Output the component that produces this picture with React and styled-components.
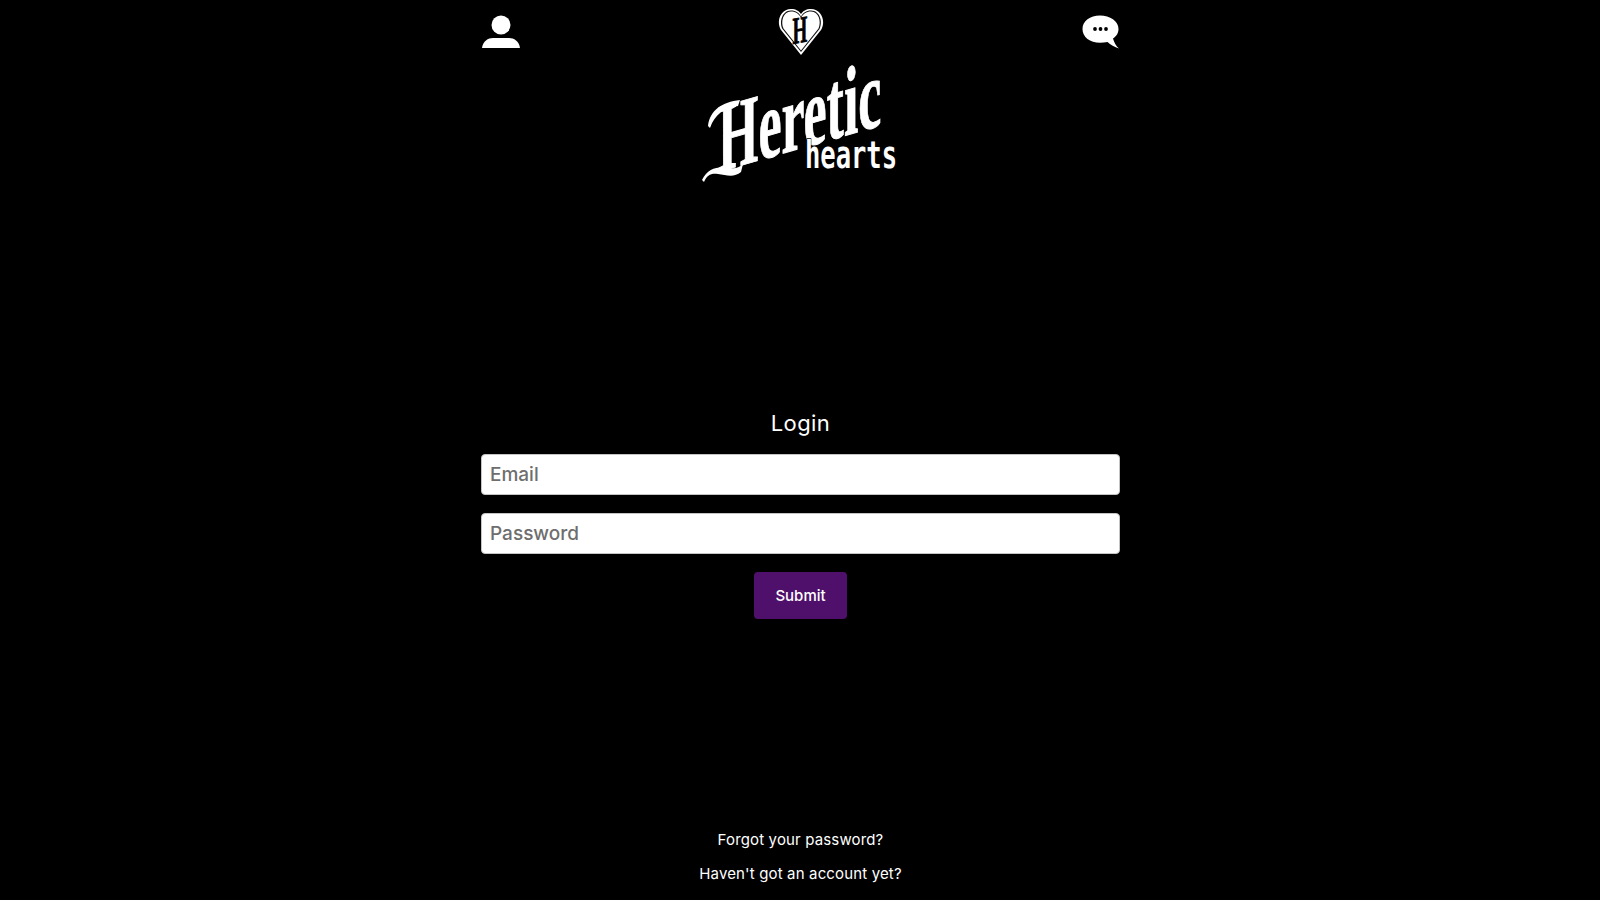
import React from 'react';
import styled, {createGlobalStyle} from 'styled-components';

const GlobalStyle = createGlobalStyle`
    html, body {
        margin: 0;
        height: 100%;
        background: #000;
    }

    body {
        font-family: "Inter", "Noto Sans", sans-serif;
        color: #fff;
    }
`;

const UserIcon = () => (
    <svg width="40" height="36" viewBox="0 0 40 36" aria-hidden="true">
        <circle cx="20" cy="11" r="9.5" fill="#fff"/>
        <path d="M1 34 C2 27 7 24 12 24 H28 C33 24 38 27 39 34 Z" fill="#fff"/>
    </svg>
);

const HeartIcon = () => (
    <svg width="46" height="48" viewBox="0 0 46 48" aria-hidden="true">
        <path d="M23 47 L3 22 C-2 14 2 1 13 1 C18 1 21 3 23 6 C25 3 28 1 33 1 C44 1 48 14 43 22 Z" fill="#fff"/>
        <path d="M23 44 L4.500 21 C1 14 4 2.500 13 2.500 C18 2.500 21 5 23 8.500 C25 5 28 2.500 33 2.500 C42 2.500 45 14 41.500 21 Z" fill="#111"/>
        <path d="M23 42.500 L5.500 20.500 C2.500 14 5 3.500 13 3.500 C18 3.500 21 6 23 10 C25 6 28 3.500 33 3.500 C41 3.500 43.500 14 40.500 20.500 Z" fill="#fff"/>
        <g transform="translate(14.500 36) skewY(-10) scale(0.5 1)">
            <text x="0" y="0" fontFamily="Liberation Serif, serif" fontWeight="700" fontSize="38" stroke="#000" strokeWidth="0.8" fill="#000">H</text>
        </g>
    </svg>
);

const ChatIcon = () => (
    <svg width="38" height="34" viewBox="0 0 38 34" aria-hidden="true">
        <path d="M18 0.500 C28 0.500 36.500 6 36.500 14 C36.500 18.500 34 21.500 31 23.500 C32 27 34 31 37 33.500 C32.500 32 28.500 30 25.500 27 C23 27.500 20.500 27.800 18 27.800 C8 27.800 0.500 22 0.500 14 C0.500 6 8 0.500 18 0.500 Z" fill="#fff"/>
        <circle cx="13" cy="14" r="1.900" fill="#000"/>
        <circle cx="18.500" cy="14" r="1.900" fill="#000"/>
        <circle cx="24" cy="14" r="1.900" fill="#000"/>
    </svg>
);

const Logo = () => (
    <LogoSvg width="200" height="120" viewBox="0 0 200 120" role="img">
        <path d="M2 116 C8 104 18 102 30 104 C36 105 40 103 43 100 L41 108 C34 114 26 111 18 110 C11 109 7 111 4 118 Z" fill="#fff"/>
        <path d="M8 62 C10 46 22 38 40 36 L38 42 C24 44 15 50 10 64 Z" fill="#fff"/>
        <g transform="translate(18 108) skewY(-16) scale(0.53 1)">
            <text x="0" y="0" fontFamily="Liberation Serif, serif" fontWeight="700" fontSize="98" stroke="#fff" strokeWidth="1" fill="#fff">Heretic</text>
        </g>
        <text x="105" y="104" fontFamily="DejaVu Sans Mono, Liberation Mono, monospace" fontWeight="700" fontSize="37" textLength="92" lengthAdjust="spacingAndGlyphs" stroke="#000" strokeWidth="1.500" paintOrder="stroke" fill="#fff">hearts</text>
    </LogoSvg>
);

export default function App() {
    return (
        <>
            <GlobalStyle/>
            <Page>
                <Header>
                    <IconRow>
                        <NavIcon $place="start"><UserIcon/></NavIcon>
                        <NavIcon $top={8}><HeartIcon/></NavIcon>
                        <NavIcon $top={15} $place="end"><ChatIcon/></NavIcon>
                    </IconRow>
                    <LogoBox><Logo/></LogoBox>
                </Header>
                <LoginForm>
                    <Title>Login</Title>
                    <Field type="email" placeholder="Email"/>
                    <Field type="password" placeholder="Password"/>
                    <Submit type="button">Submit</Submit>
                </LoginForm>
                <Footer>
                    <FooterLink>Forgot your password?</FooterLink>
                    <FooterLink>Haven't got an account yet?</FooterLink>
                </Footer>
            </Page>
        </>
    );
}

const Page = styled.div`
    width: 640px;
    height: 900px;
    margin: 0 auto;
    display: flex;
    flex-direction: column;
    overflow: hidden;
`;

const Header = styled.header`
    height: 200px;
    display: flex;
    flex-direction: column;
`;

const IconRow = styled.div`
    height: 64px;
    padding: 0 0 0 1px;
    display: grid;
    grid-template-columns: 1fr auto 1fr;
    align-items: start;
`;

const NavIcon = styled.a`
    display: block;
    line-height: 0;
    justify-self: ${props => props.$place || 'center'};
    margin-top: ${props => props.$top || 14}px;
`;

const LogoBox = styled.div`
    display: flex;
    justify-content: center;
    line-height: 0;
`;

const LogoSvg = styled.svg`
    overflow: visible;
`;

const LoginForm = styled.form`
    margin-top: 208px;
    padding-left: 1px;
    display: flex;
    flex-direction: column;
    align-items: center;
`;

const Title = styled.h2`
    margin: 0 0 15px;
    height: 31px;
    font-size: 22px;
    font-weight: 400;
    line-height: 30px;
    letter-spacing: 0.4px;
`;

const Field = styled.input`
    box-sizing: border-box;
    width: 100%;
    height: 41px;
    margin-bottom: 18px;
    padding: 0 8px;
    border: 1px solid #c4c4c4;
    border-radius: 4px;
    background: #fff;
    font-family: inherit;
    font-size: 19px;
    font-weight: 500;
    outline: none;

    &::placeholder {
        color: #6e6e6e;
        opacity: 1;
    }
`;

const Submit = styled.button`
    width: 93px;
    height: 47px;
    padding: 0;
    border: 0;
    border-radius: 4px;
    background: #4f106b;
    color: #fff;
    font-family: inherit;
    font-size: 15px;
    font-weight: 500;
`;

const Footer = styled.footer`
    margin-top: auto;
    padding: 0 0 17px 1px;
    display: flex;
    flex-direction: column;
    align-items: center;
    gap: 15px;
`;

const FooterLink = styled.a`
    font-size: 15px;
    line-height: 19px;
    letter-spacing: 0.15px;
`;
